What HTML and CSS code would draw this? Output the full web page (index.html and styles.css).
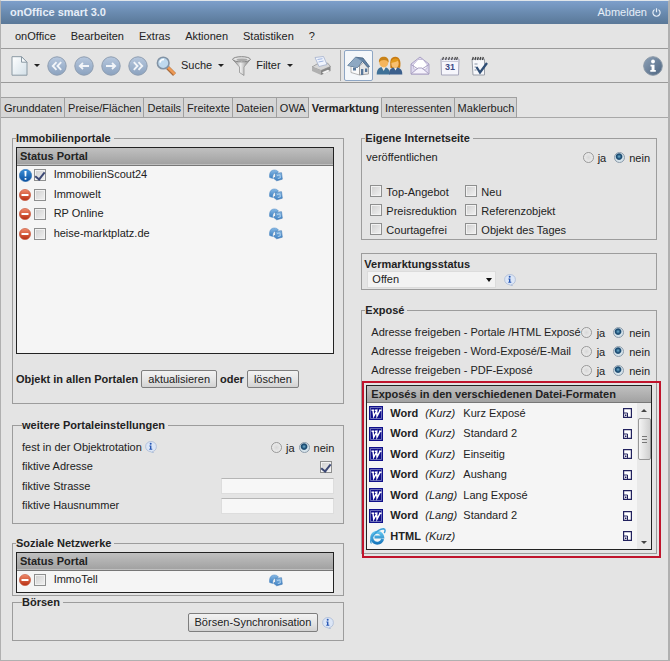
FILE: index.html
```html
<!DOCTYPE html>
<html lang="de">
<head>
<meta charset="utf-8">
<meta name="viewport" content="width=device-width, initial-scale=1">
<title>onOffice smart 3.0</title>
<link rel="stylesheet" href="styles.css">
</head>
<body>
<svg class="sprite" width="0" height="0" aria-hidden="true">
  <defs>
    <linearGradient id="g-blue" x1="0" y1="0" x2="0" y2="1"><stop offset="0" stop-color="#b7c8de"/><stop offset="1" stop-color="#8ba2bf"/></linearGradient>
    <linearGradient id="g-steel" x1="0" y1="0" x2="1" y2="1"><stop offset="0" stop-color="#8ea2b8"/><stop offset="1" stop-color="#4c637f"/></linearGradient>
    <linearGradient id="g-red" x1="0" y1="0" x2="0" y2="1"><stop offset="0" stop-color="#f08b6c"/><stop offset="1" stop-color="#b92f12"/></linearGradient>
    <linearGradient id="g-alert" x1="0" y1="0" x2="0" y2="1"><stop offset="0" stop-color="#3a8fd8"/><stop offset="1" stop-color="#0b4f9e"/></linearGradient>
    <linearGradient id="g-page" x1="0" y1="0" x2="1" y2="1"><stop offset="0" stop-color="#ffffff"/><stop offset="1" stop-color="#d3e0e8"/></linearGradient>
    <linearGradient id="g-metal" x1="0" y1="0" x2="1" y2="0"><stop offset="0" stop-color="#777"/><stop offset=".45" stop-color="#eee"/><stop offset="1" stop-color="#777"/></linearGradient>
    <linearGradient id="g-sync" x1="0" y1="0" x2="0" y2="1"><stop offset="0" stop-color="#86b8e4"/><stop offset="1" stop-color="#3d80c2"/></linearGradient>
    <linearGradient id="g-ie" x1="0" y1="0" x2="0" y2="1"><stop offset="0" stop-color="#63c4ee"/><stop offset="1" stop-color="#1878bd"/></linearGradient>
  </defs>
  <symbol id="i-page" viewBox="0 0 17 20"><path d="M1 .7h9.5l5.5 5.5v13H1z" fill="url(#g-page)" stroke="#8a99a3"/><path d="M10.5.7v5.5H16z" fill="#f6fafc" stroke="#8a99a3"/></symbol>
  <symbol id="i-first" viewBox="0 0 20 20"><circle cx="10" cy="10" r="9.2" fill="url(#g-blue)" stroke="#8e9db0"/><path d="M9.5 6.2 5.8 10l3.7 3.8M14.2 6.2 10.5 10l3.7 3.8" fill="none" stroke="#f2f5f9" stroke-width="1.9"/></symbol>
  <symbol id="i-prev" viewBox="0 0 20 20"><circle cx="10" cy="10" r="9.2" fill="url(#g-blue)" stroke="#8e9db0"/><path d="M15 10H6M9 7l-3.2 3L9 13" fill="none" stroke="#f2f5f9" stroke-width="1.8"/></symbol>
  <symbol id="i-next" viewBox="0 0 20 20"><circle cx="10" cy="10" r="9.2" fill="url(#g-blue)" stroke="#8e9db0"/><path d="M5 10h9M11 7l3.2 3L11 13" fill="none" stroke="#f2f5f9" stroke-width="1.8"/></symbol>
  <symbol id="i-last" viewBox="0 0 20 20"><circle cx="10" cy="10" r="9.2" fill="url(#g-blue)" stroke="#8e9db0"/><path d="m5.8 6.2 3.7 3.8-3.7 3.8M10.5 6.2l3.7 3.8-3.7 3.8" fill="none" stroke="#f2f5f9" stroke-width="1.9"/></symbol>
  <symbol id="i-search" viewBox="0 0 20 20"><path d="m11.5 11.5 7 7" stroke="#a96a3c" stroke-width="4"/><path d="m11.8 11.2 7 7" stroke="#ee9a55" stroke-width="2.6"/><circle cx="7.2" cy="7" r="5.8" fill="#bfd9ee" stroke="#8293a5" stroke-width="1.6"/><path d="M4 6.5A3.5 3.5 0 0 1 8 3.6" fill="none" stroke="#fff" stroke-width="1.6"/></symbol>
  <symbol id="i-funnel" viewBox="0 0 19 20"><path d="M.8 3.5 7.5 11v5.500l4.500 3V11l6.200-7.500z" fill="url(#g-metal)" stroke="#888" stroke-width=".7"/><ellipse cx="9.500" cy="3.300" rx="8.800" ry="2.600" fill="#e4e4e4" stroke="#858585"/><ellipse cx="10" cy="3.800" rx="5.500" ry="1.300" fill="#aaa"/></symbol>
  <symbol id="i-printer" viewBox="0 0 20 20"><path d="M1 11 6 8l10.500-1L19.500 10.500 10 14.500z" fill="#d6d6d6" stroke="#888" stroke-width=".7"/><path d="m4 1.500 8.500-1 3.500 8-8 2z" fill="#f0f4fd" stroke="#a3b0cc" stroke-width=".8"/><path d="m6.500 3.500 5-.8M7.500 6l5-1" stroke="#9fb5e0"/><path d="m1 11 9 3.500V19l-9-4z" fill="#b0b0b0"/><path d="m10 14.500 9.500-4V15L10 19z" fill="#858585"/><path d="m11 16.300 6-2.500 2 1.200-6 3z" fill="#f2f2f2"/></symbol>
  <symbol id="i-house" viewBox="0 0 23 20"><path d="M4 9v7.500l8.500 2.500V8z" fill="#fafafa" stroke="#999" stroke-width=".7"/><path d="M12.500 10 17 6l4.500 5v7l-9 1z" fill="#e6e6e6" stroke="#8a8a8a" stroke-width=".7"/><path d="M.8 9.500 8.500 1.200 16 2l6.500 8.500-1.800.8-5.200-6-5 6.200z" fill="#6484a6" stroke="#405d7c" stroke-width=".8"/><path d="M.8 9.500 8.500 1.200l6.500 4-4.500 6.300z" fill="#8ea8c2"/><path d="M14 13h2.300v6H14zM18 12.500h2.300v3.500H18zM6 11.500h3v3H6z" fill="#59789b"/></symbol>
  <symbol id="i-people" viewBox="0 0 27 20"><path d="M.7 18.500c0-6 3-7.500 6.800-7.500s6.300 2 6.300 7.500z" fill="#3f7197"/><path d="M14.500 12C13.500 4 15 .8 19.300.8c4.200 0 6 4 4.800 11z" fill="#c97b12"/><path d="M13 18.500c0-5.500 2.500-7 6.500-7s6.800 1.500 6.800 7z" fill="#3b5f8c"/><path d="m5.500 11 2.200 4 2.200-4zM17.800 11.500l1.700 3 1.700-3z" fill="#f3ece0"/><ellipse cx="7.800" cy="6.500" rx="4.500" ry="5" fill="#f4b55d"/><path d="M3 6.500C2.500 2.500 5 .8 7.800.8s5.400 2 4.800 5.700C11.500 4.800 10 4 8 4S4 4.800 3 6.500z" fill="#c98218"/><ellipse cx="19" cy="7.500" rx="3.700" ry="4.300" fill="#f8c070"/><path d="M14.800 7c.5-4.500 5-6 8-3-2 2-5 2.500-8 3z" fill="#e29a1c"/></symbol>
  <symbol id="i-mail" viewBox="0 0 20 19"><path d="m1 8 9-7 9 7v10H1z" fill="#ded9ee" stroke="#aaa1c3"/><path d="m3.500 8.500 4.500-5h5l4 5v4L10 15l-6.500-2.500z" fill="#fff" stroke="#b8afd0" stroke-width=".7"/><path d="m1 18 7-6h4l7 6zM1 8.500l7 4.500M19 8.500 12 13" fill="#f5f2fc" stroke="#aaa1c3"/></symbol>
  <symbol id="i-note" viewBox="0 0 18 20"><path d="M2 3h12.500v16H3z" fill="#f7f8fb" stroke="#9a9fa8"/><path d="M2.500 4 3.300 1M5 4l.8-3M7.500 4l.8-3M10 4l.8-3M12.500 4l.8-3" stroke="#444" stroke-width="1.300"/><path d="M4.500 8h3M4.500 11h2M4.500 14h2" stroke="#8893a5"/><path d="m6.500 11 3.500 5.500L17 7" fill="none" stroke="#2f4e75" stroke-width="2.300"/></symbol>
  <symbol id="i-about" viewBox="0 0 20 20"><circle cx="10" cy="10" r="9.300" fill="url(#g-steel)" stroke="#8997a6"/><circle cx="10" cy="5.500" r="1.900" fill="#fff"/><path d="M7.500 8.700h4v5.300h1.300v1.700H7.300V14h1.300v-3.600H7.500z" fill="#fff"/></symbol>
  <symbol id="i-power" viewBox="0 0 10 10"><path d="M2.800 1.800a4 4 0 1 0 4.400 0M5 .3v4.500" fill="none" stroke="#e6eef8" stroke-width="1.300"/></symbol>
  <symbol id="i-stop" viewBox="0 0 12 12"><circle cx="6" cy="6" r="5.600" fill="url(#g-red)" stroke="#c25135" stroke-width=".6"/><path d="M2.500 5h7v2h-7z" fill="#fff"/></symbol>
  <symbol id="i-alert" viewBox="0 0 12 12"><circle cx="6" cy="6" r="5.700" fill="url(#g-alert)" stroke="#2d6cae" stroke-width=".5"/><path d="M5 1.800h2L6.700 7H5.300zM5.200 8.200h1.600v1.700H5.200z" fill="#fff"/></symbol>
  <symbol id="i-sync" viewBox="0 0 14 13"><path d="M.6 8.500C0 4 1.800 1 5.300 1c2 0 3.200.7 4 1.800L8 4.500C5.500 3.500 3.500 5 3.700 9.500z" fill="url(#g-sync)" stroke="#4a86c2" stroke-width=".5"/><path d="m6.300 4.500 6.200-.8.800 6.500-5.600 1.600-3.200-2.600 2-1.400z" fill="url(#g-sync)" stroke="#3e76b0" stroke-width=".6"/><path d="m8 6.500 3-.6.300 3-2.500.6" fill="none" stroke="#b8d7f2" stroke-width=".9"/></symbol>
  <symbol id="i-hint" viewBox="0 0 12 12"><path d="M6 .5c3 0 5.400 2 5.400 5S9.500 10.300 7.500 10.500L8.500 12 5 10.500C2.500 10.200.6 8.300.6 5.500S3 .5 6 .5z" fill="#dce6f6" stroke="#a4b5d2" stroke-width=".7"/><circle cx="5.700" cy="2.800" r="1" fill="#2858b5"/><path d="M4.400 4.500h2v3.300h.9v1H4.300v-1h.7V5.500h-.6z" fill="#2858b5"/></symbol>
  <symbol id="i-word" viewBox="0 0 14 14"><path d="M0 0h14v14H0z" fill="#10108a"/><path d="M1.500 1.500h11v11h-11z" fill="none" stroke="#a9acd8" stroke-width=".6"/><path d="M2.500 4.200h2.800M6 4.200h2.500M10 4.200h2.500M4 4.200l.7 6L7.700 5l.3 5.200 3.200-6" fill="none" stroke="#fff" stroke-width="1.400"/></symbol>
  <symbol id="i-ie" viewBox="0 0 17 17"><path d="M13.600 11A5.500 5.500 0 1 1 13.700 9H5.500" fill="none" stroke="url(#g-ie)" stroke-width="3"/><path d="M2.500 15.500C-1.500 12.500 8 1 14.500.8c2.500.3 1.500 3 .7 4.200" fill="none" stroke="#3c9fd8" stroke-width="1.400"/></symbol>
  <symbol id="i-open" viewBox="0 0 9 10"><path d="M.6.600h7.800v8.800H.6z" fill="#fff" stroke="#22225e" stroke-width="1.200"/><path d="M1 5h3.500v4" fill="none" stroke="#22225e"/><path d="M2 6.500h1.500V8H2z" fill="#22225e"/></symbol>
</svg>

<div class="window">
  <header class="titlebar">
    <h1 class="title">onOffice smart 3.0</h1>
    <a class="logout" href="#">Abmelden <svg width="9" height="9" aria-hidden="true"><use href="#i-power"/></svg></a>
  </header>

  <nav class="menu">
    <a href="#">onOffice</a><a href="#">Bearbeiten</a><a href="#">Extras</a><a href="#">Aktionen</a><a href="#">Statistiken</a><a href="#">?</a>
  </nav>

  <div class="toolbar">
    <button class="tool with-caret" type="button" aria-label="Neu"><svg width="17" height="20"><use href="#i-page"/></svg></button>
    <div class="pager">
      <button class="tool" type="button" aria-label="Erster"><svg width="20" height="20"><use href="#i-first"/></svg></button>
      <button class="tool" type="button" aria-label="Zurück"><svg width="20" height="20"><use href="#i-prev"/></svg></button>
      <button class="tool" type="button" aria-label="Weiter"><svg width="20" height="20"><use href="#i-next"/></svg></button>
      <button class="tool" type="button" aria-label="Letzter"><svg width="20" height="20"><use href="#i-last"/></svg></button>
    </div>
    <button class="tool with-caret" type="button"><svg width="20" height="20"><use href="#i-search"/></svg>Suche</button>
    <button class="tool with-caret" type="button"><svg width="19" height="20"><use href="#i-funnel"/></svg>Filter</button>
    <button class="tool print" type="button" aria-label="Drucken"><svg width="20" height="20"><use href="#i-printer"/></svg></button>
    <div class="modules">
      <button class="tool current" type="button" aria-label="Immobilien"><svg width="23" height="20"><use href="#i-house"/></svg></button>
      <button class="tool contacts" type="button" aria-label="Adressen"><svg width="27" height="20"><use href="#i-people"/></svg></button>
      <button class="tool" type="button" aria-label="E-Mail"><svg width="20" height="19"><use href="#i-mail"/></svg></button>
      <button class="tool" type="button" aria-label="Kalender">
        <svg width="20" height="20" viewBox="0 0 20 20"><path d="M1 3h18l-.5 16h-17z" fill="#f6f6fc" stroke="#a6a6bb"/><path d="M2 5.500h16" stroke="#c9c9d8"/><path d="m2.500 4 1-3m2 3 1-3m2 3 1-3m2 3 1-3m2 3 1-3m1 3 1-3" stroke="#555" stroke-width="1.300"/><text x="10" y="14" class="cal-day">31</text></svg>
      </button>
      <button class="tool" type="button" aria-label="Aufgaben"><svg width="18" height="20"><use href="#i-note"/></svg></button>
    </div>
    <button class="tool about" type="button" aria-label="Info"><svg width="20" height="20"><use href="#i-about"/></svg></button>
  </div>

  <nav class="tabs">
    <a href="#">Grunddaten</a><a href="#">Preise/Flächen</a><a href="#">Details</a><a href="#">Freitexte</a><a href="#">Dateien</a><a href="#">OWA</a><a class="active" href="#" aria-current="page">Vermarktung</a><a href="#">Interessenten</a><a href="#">Maklerbuch</a>
  </nav>

  <main class="content">
    <div class="column">
      <fieldset class="portals">
        <legend>Immobilienportale</legend>
        <div class="listbox tall">
          <table class="portal-table">
            <thead><tr><th colspan="2">Status</th><th colspan="2">Portal</th></tr></thead>
            <tbody>
              <tr><td class="status"><svg width="13" height="13"><use href="#i-alert"/></svg></td><td class="check"><input type="checkbox" id="p1" checked></td><td class="name"><label for="p1">ImmobilienScout24</label></td><td><svg width="14" height="13"><use href="#i-sync"/></svg></td></tr>
              <tr><td class="status"><svg width="12" height="12"><use href="#i-stop"/></svg></td><td class="check"><input type="checkbox" id="p2"></td><td class="name"><label for="p2">Immowelt</label></td><td><svg width="14" height="13"><use href="#i-sync"/></svg></td></tr>
              <tr><td class="status"><svg width="12" height="12"><use href="#i-stop"/></svg></td><td class="check"><input type="checkbox" id="p3"></td><td class="name"><label for="p3">RP Online</label></td><td><svg width="14" height="13"><use href="#i-sync"/></svg></td></tr>
              <tr><td class="status"><svg width="12" height="12"><use href="#i-stop"/></svg></td><td class="check"><input type="checkbox" id="p4"></td><td class="name"><label for="p4">heise-marktplatz.de</label></td><td><svg width="14" height="13"><use href="#i-sync"/></svg></td></tr>
            </tbody>
          </table>
        </div>
        <div class="bulk">
          <span>Objekt in allen Portalen</span>
          <button class="btn" type="button">aktualisieren</button>
          <span>oder</span>
          <button class="btn" type="button">löschen</button>
        </div>
      </fieldset>

      <fieldset class="settings">
        <legend>weitere Portaleinstellungen</legend>
        <div class="field">
          <span class="caption">fest in der Objektrotation <svg width="12" height="12"><use href="#i-hint"/></svg></span>
          <span class="radios"><label><input type="radio" name="rot"> ja</label><label><input type="radio" name="rot" checked> nein</label></span>
        </div>
        <div class="field"><label for="adr">fiktive Adresse</label><input class="adr" type="checkbox" id="adr" checked></div>
        <div class="field"><label for="str">fiktive Strasse</label><input type="text" id="str"></div>
        <div class="field"><label for="nr">fiktive Hausnummer</label><input type="text" id="nr"></div>
      </fieldset>

      <fieldset class="social">
        <legend>Soziale Netzwerke</legend>
        <div class="listbox">
          <table class="portal-table">
            <thead><tr><th colspan="2">Status</th><th colspan="2">Portal</th></tr></thead>
            <tbody>
              <tr><td class="status"><svg width="12" height="12"><use href="#i-stop"/></svg></td><td class="check"><input type="checkbox" id="s1"></td><td class="name"><label for="s1">ImmoTell</label></td><td><svg width="14" height="13"><use href="#i-sync"/></svg></td></tr>
            </tbody>
          </table>
        </div>
      </fieldset>

      <fieldset class="exchange">
        <legend>Börsen</legend>
        <div class="sync">
          <button class="btn" type="button">Börsen-Synchronisation</button>
          <svg width="12" height="12"><use href="#i-hint"/></svg>
        </div>
      </fieldset>
    </div>

    <div class="column">
      <fieldset class="website">
        <legend>Eigene Internetseite</legend>
        <div class="row publish">
          <span>veröffentlichen</span>
          <span class="radios"><label><input type="radio" name="pub"> ja</label><label><input type="radio" name="pub" checked> nein</label></span>
        </div>
        <div class="flags">
          <label><input type="checkbox"> Top-Angebot</label><label><input type="checkbox"> Neu</label>
          <label><input type="checkbox"> Preisreduktion</label><label><input type="checkbox"> Referenzobjekt</label>
          <label><input type="checkbox"> Courtagefrei</label><label><input type="checkbox"> Objekt des Tages</label>
        </div>
      </fieldset>

      <section class="state">
        <label for="state">Vermarktungsstatus</label>
        <div class="state-row">
          <span class="select"><select id="state"><option>Offen</option></select></span>
          <svg width="12" height="12"><use href="#i-hint"/></svg>
        </div>
      </section>

      <fieldset class="expose">
        <legend>Exposé</legend>
        <div class="row"><span>Adresse freigeben - Portale /HTML Exposé</span><span class="radios wide"><label><input type="radio" name="e1"> ja</label><label><input type="radio" name="e1" checked> nein</label></span></div>
        <div class="row"><span>Adresse freigeben - Word-Exposé/E-Mail</span><span class="radios wide"><label><input type="radio" name="e2"> ja</label><label><input type="radio" name="e2" checked> nein</label></span></div>
        <div class="row"><span>Adresse freigeben - PDF-Exposé</span><span class="radios wide"><label><input type="radio" name="e3"> ja</label><label><input type="radio" name="e3" checked> nein</label></span></div>
        <div class="listbox formats">
          <h2 class="list-head">Exposés in den verschiedenen Datei-Formaten</h2>
          <div class="scroller">
            <table class="format-table">
              <tbody>
                <tr><td class="app"><svg width="14" height="14"><use href="#i-word"/></svg></td><th scope="row">Word</th><td class="kind">(Kurz)</td><td>Kurz Exposé</td><td class="open"><svg width="9" height="10"><use href="#i-open"/></svg></td></tr>
                <tr><td class="app"><svg width="14" height="14"><use href="#i-word"/></svg></td><th scope="row">Word</th><td class="kind">(Kurz)</td><td>Standard 2</td><td class="open"><svg width="9" height="10"><use href="#i-open"/></svg></td></tr>
                <tr><td class="app"><svg width="14" height="14"><use href="#i-word"/></svg></td><th scope="row">Word</th><td class="kind">(Kurz)</td><td>Einseitig</td><td class="open"><svg width="9" height="10"><use href="#i-open"/></svg></td></tr>
                <tr><td class="app"><svg width="14" height="14"><use href="#i-word"/></svg></td><th scope="row">Word</th><td class="kind">(Kurz)</td><td>Aushang</td><td class="open"><svg width="9" height="10"><use href="#i-open"/></svg></td></tr>
                <tr><td class="app"><svg width="14" height="14"><use href="#i-word"/></svg></td><th scope="row">Word</th><td class="kind">(Lang)</td><td>Lang Exposé</td><td class="open"><svg width="9" height="10"><use href="#i-open"/></svg></td></tr>
                <tr><td class="app"><svg width="14" height="14"><use href="#i-word"/></svg></td><th scope="row">Word</th><td class="kind">(Lang)</td><td>Standard 2</td><td class="open"><svg width="9" height="10"><use href="#i-open"/></svg></td></tr>
                <tr><td class="app"><svg width="17" height="17"><use href="#i-ie"/></svg></td><th scope="row">HTML</th><td class="kind">(Kurz)</td><td></td><td class="open"><svg width="9" height="10"><use href="#i-open"/></svg></td></tr>
              </tbody>
            </table>
            <div class="scrollbar" aria-hidden="true"><span class="arrow up"></span><span class="thumb"></span><span class="arrow down"></span></div>
          </div>
          <div class="highlight"></div>
        </div>
      </fieldset>
    </div>
  </main>
</div>
</body>
</html>
```
FILE: styles.css
```css
* { box-sizing: border-box; }

body {
  margin: 0;
  background: #dcdcdc;
  color: #222;
  font: 11px/13px "Liberation Sans", Arial, sans-serif;
}

a { color: inherit; text-decoration: none; }
svg { display: block; flex: none; }
button, input, select { font: inherit; color: inherit; margin: 0; }
.sprite { position: absolute; }
.cal-day { font: bold 9px "Liberation Sans", Arial, sans-serif; fill: #3e4b86; text-anchor: middle; }

.window {
  min-height: 100vh;
  border: 1px solid #b0b0b0;
  border-top-color: #dfe5ea;
  border-right-width: 2px;
  background: #e4e4e4;
}

.titlebar {
  display: flex;
  align-items: center;
  justify-content: space-between;
  height: 23px;
  padding: 0 7px 0 9px;
  background: linear-gradient(#7d9fcb, #6a8bb0 50%, #5a7898);
  color: #e6eef8;
}
.title { margin: 0; font-size: 11px; line-height: 13px; }
.logout { display: flex; align-items: center; gap: 5px; }

.menu {
  display: flex;
  align-items: center;
  gap: 15px;
  height: 25px;
  padding-left: 14px;
  border-bottom: 1px solid #9a9a9a;
}

.toolbar {
  display: flex;
  align-items: center;
  height: 34px;
  padding: 0 5px 0 10px;
  border-bottom: 1px solid #9a9a9a;
}
.tool {
  display: flex;
  align-items: center;
  gap: 5px;
  padding: 0;
  border: 0;
  background: none;
}
.with-caret::after {
  content: "";
  margin-left: 1px;
  border: 3px solid transparent;
  border-top-color: #222;
  border-bottom: 0;
}
.with-caret + .with-caret { margin-left: 8px; }
.pager { display: flex; gap: 7px; margin: 0 8px 0 7px; }
.print { margin-left: 18px; }
.modules {
  display: flex;
  align-items: center;
  gap: 10px;
  margin-left: 9px;
  padding-left: 3px;
  border-left: 1px solid #a8a8a8;
}
.current {
  height: 31px;
  margin-right: -7px;
  padding: 0 2px;
  border: 1px solid #8ea6c4;
  border-radius: 2px;
  background: #f4f7fa;
}
.contacts { margin-right: -3px; }
.about { margin-left: auto; }

.tabs {
  display: flex;
  height: 21px;
  margin-top: 14px;
  border-bottom: 1px solid #a8a8a8;
}
.tabs a {
  height: 21px;
  padding: 4px 2px 3px 3px;
  border: 1px solid #a0a0a0;
  border-left: 0;
  background: #d6d6d6;
}
.tabs .active { border-top-color: #c4c4c4; border-bottom-color: #e4e4e4; background: #e4e4e4; font-weight: bold; }

.content {
  display: grid;
  grid-template-columns: 333fr 295fr;
  gap: 17px;
  padding: 14px 11px 19px;
}

fieldset {
  min-width: 0;
  margin: 0;
  padding: 0 9px 0 4px;
  border: 1px solid #9c9c9c;
}
legend { padding: 0 3px 0 0; font-weight: bold; }
.portals, .social, .website, .expose { padding-left: 3px; }
.portals { padding-top: 2px; padding-bottom: 15px; }
.settings { margin-top: 15px; padding: 5px 9px 8px; }
.social { margin-top: 13px; padding-top: 2px; padding-bottom: 2px; }
.exchange { padding: 4px 9px 8px; }

.listbox { border: 1px solid #222; background: #f5f5f5; }
.tall { height: 207px; }

table { width: 100%; border-collapse: collapse; }
td, th { padding: 0; text-align: left; }
.portal-table thead tr, .list-head {
  height: 17px;
  background: linear-gradient(#c0c0c0, #a2a2a2);
  border-bottom: 1px solid #777;
}
.portal-table th { padding-left: 3px; }
.portal-table th:first-child { width: 36px; }
.portal-table tbody td { height: 20px; vertical-align: middle; }
.portal-table .status { width: 17px; padding-left: 2px; }
.portal-table .check { width: 19px; }
.portal-table .name { width: 215px; }
.portal-table .name label { display: block; padding-bottom: 1px; }
.portal-table .check input { display: block; }
.tall tbody tr:nth-child(even) td { height: 19px; }
.social .listbox { height: 41px; }

input[type="checkbox"] {
  appearance: none;
  flex: none;
  width: 12px;
  height: 12px;
  border: 1px solid #8e8f8f;
  background: linear-gradient(135deg, #cfcfcf, #f2f2f2);
  box-shadow: inset 0 0 0 1px #f2f2f2;
}
input[type="checkbox"]:checked::before {
  content: "";
  display: block;
  width: 4px;
  height: 8px;
  margin: 0 auto;
  border: solid #3c4874;
  border-width: 0 2px 2px 0;
  transform: rotate(38deg);
}
input[type="radio"] {
  appearance: none;
  flex: none;
  width: 11px;
  height: 11px;
  border: 1px solid #999;
  border-radius: 50%;
  background: radial-gradient(#d8d8d8, #f2f2f2);
}
input[type="radio"]:checked {
  border-color: #8c9cab;
  background: radial-gradient(circle at 45% 40%, #6fb0d0 0, #1d4d73 30%, #1d4d73 38%, #d5e2ea 52%);
}
input[type="text"] {
  width: 113px;
  height: 16px;
  padding: 0 2px;
  border: 1px solid #ddd;
  border-top-color: #b5b5b5;
  background: #f7f7f7;
}

.btn {
  height: 18px;
  padding: 0 6px;
  border: 1px solid #7e7e7e;
  border-radius: 2px;
  background: linear-gradient(#f2f2f2, #e6e6e6 50%, #d2d2d2);
}
.bulk { display: flex; align-items: center; gap: 3px; margin-top: 16px; font-weight: bold; }
.bulk .btn { font-weight: normal; }
.sync { display: flex; align-items: center; justify-content: flex-end; gap: 4px; }
.sync .btn { height: 19px; }

.field { display: flex; align-items: center; justify-content: space-between; height: 20px; }
.field:nth-of-type(even) { height: 19px; }
.adr { margin-right: 2px; }
.caption { display: flex; gap: 3px; }
.radios { display: flex; gap: 4px; padding-top: 2px; }
.radios label { display: flex; gap: 4px; }
.wide { gap: 8px; }
.wide label { gap: 5px; }

.row { display: flex; justify-content: space-between; align-items: center; height: 19px; white-space: nowrap; }
.website, .expose { padding-right: 6px; }
.publish { height: 20px; margin: 2px 0 15px 1px; }
.publish .radios { gap: 8px; }
.flags { display: grid; grid-template-columns: 95px 1fr; grid-auto-rows: 19px; padding-left: 5px; }
.flags label { display: flex; gap: 4px; padding-top: 3px; line-height: 15px; }

.state { margin-top: 13px; padding: 3px 2px 1px; border: 1px solid #9c9c9c; }
.state label { display: block; font-weight: bold; line-height: 14px; }
.state-row { display: flex; align-items: center; gap: 8px; padding-left: 3px; }
.select { position: relative; width: 129px; }
.select::after {
  content: "";
  position: absolute;
  right: 4px;
  top: 7px;
  border: 3px solid transparent;
  border-top: 4px solid #111;
  border-bottom: 0;
  pointer-events: none;
}
select {
  appearance: none;
  display: block;
  width: 100%;
  height: 17px;
  padding: 0 14px 0 4px;
  border: 1px solid #dcdcdc;
  border-radius: 0;
  background: #f3f3f3;
}

.expose { margin-top: 14px; padding-top: 6px; padding-bottom: 3px; }
.expose .row { padding-left: 6px; }
.expose .listbox { position: relative; margin: 5px -2px 0 1px; }
.list-head { margin: 0; padding: 2px 4px; font-size: 11px; line-height: 13px; }
.scroller { display: flex; align-items: flex-start; height: 146px; }
.format-table { flex: 1; }
.format-table td { height: 20px; }
.format-table tr:nth-child(even) td { height: 21px; }
.format-table .app { width: 23px; padding-left: 2px; }
.format-table th { width: 35px; }
.format-table .kind { width: 38px; font-style: italic; }
.format-table .open { width: 14px; }
.scrollbar {
  display: flex;
  flex-direction: column;
  align-items: center;
  align-self: stretch;
  width: 14px;
  background: #e9e9e9;
}
.arrow { margin: 5px 0; border: 3px solid transparent; }
.up { border-bottom-color: #444; border-top: 0; margin: 6px 0; }
.down { border-top-color: #444; border-bottom: 0; margin-top: auto; }
.thumb {
  width: 13px;
  height: 42px;
  border: 1px solid #979797;
  border-radius: 2px;
  background: repeating-linear-gradient(#777 0 1px, transparent 1px 3px) center / 5px 7px no-repeat, linear-gradient(90deg, #f4f4f4, #cfcfcf);
}
.highlight {
  position: absolute;
  inset: -5px -10px -9px -5px;
  border: 2px solid #c0142c;
  pointer-events: none;
}
```
